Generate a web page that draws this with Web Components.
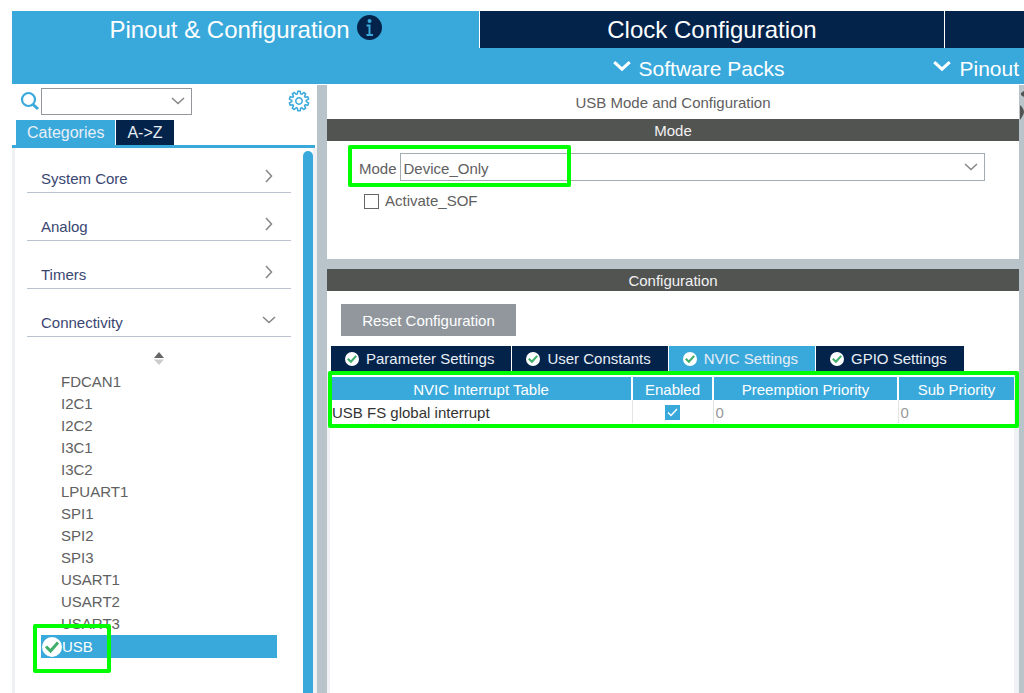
<!DOCTYPE html>
<html lang="en">
<head>
<meta charset="utf-8">
<title>Pinout &amp; Configuration</title>
<style>
  :root {
    --blue: #39a9dc;
    --navy: #03234b;
    --steel: #b8c4ca;
    --dark: #525452;
    --mist: #eff1f4;
    --mark: #00ff00;
  }
  body { margin: 0; background: #fff; color: #606060; font: 15px/22px "Liberation Sans", Arial, sans-serif; overflow: hidden; }
</style>
</head>
<body>
<config-app></config-app>
<script>
const define = (name, html) => {
  const tpl = document.createElement('template');
  tpl.innerHTML = '<style>*{box-sizing:border-box}button,select{font:inherit;color:inherit;margin:0;border:0;padding:0;background:none;border-radius:0}</style>' + html;
  customElements.define(name, class extends HTMLElement {
    constructor() {
      super();
      this.attachShadow({ mode: 'open' }).append(tpl.content.cloneNode(true));
    }
  });
};

// Outline of a gear wheel centred on the origin.
const gearPath = (teeth, inner, outer) => {
  const points = [];
  const step = Math.PI * 2 / teeth;
  for (let i = 0; i < teeth; i++) {
    [[-0.36, inner], [-0.2, outer], [0.2, outer], [0.36, inner]].forEach(([offset, radius]) => {
      const angle = (i + offset) * step - Math.PI / 2;
      points.push((Math.cos(angle) * radius).toFixed(2) + ' ' + (Math.sin(angle) * radius).toFixed(2));
    });
  }
  return 'M' + points.join('L') + 'z';
};

define('chevron-icon', `
<style>
  :host { display: block; width: 14px; height: 14px; flex: none; pointer-events: none; color: #858585; }
  :host([dir="right"]) svg { transform: rotate(-90deg); }
  :host([bold]) { width: 18px; height: 18px; color: #fff; }
  :host([bold]) path { stroke-width: 2.4; }
  svg { display: block; width: 100%; height: 100%; }
</style>
<svg viewBox="0 0 14 14" fill="none" stroke="currentColor" stroke-width="1.5"><path d="M1 4 7 9.500l6-5.500"/></svg>`);

define('status-check', `
<style>
  :host { display: block; width: 14px; height: 14px; flex: none; }
  :host([large]) { width: 20px; height: 20px; }
  svg { display: block; width: 100%; height: 100%; }
</style>
<svg viewBox="0 0 20 20"><circle cx="10" cy="10" r="10" fill="#fff"/><path d="M4 9.500 8.500 14 16 5.500" fill="none" stroke="#3fae6b" stroke-width="3"/></svg>`);

define('mark-box', `
<style>
  :host { display: block; position: absolute; border: 4px solid var(--mark); border-radius: 2px; pointer-events: none; z-index: 2; }
</style>`);

define('nav-tab', `
<style>
  :host { display: block; }
  button { display: flex; align-items: center; justify-content: center; gap: 7px; width: 100%; height: 37px; background: var(--navy); color: #fff; font-size: 24px; white-space: nowrap; }
  :host([active]) button { background: var(--blue); }
</style>
<button type="button"><slot></slot></button>`);

define('info-icon', `
<style>:host { display: block; width: 25px; height: 25px; margin-top: -4px; } svg { display: block; }</style>
<svg width="25" height="25" viewBox="0 0 25 25"><circle cx="12.500" cy="12.500" r="12.500" fill="#03234b"/><circle cx="12.500" cy="6" r="2" fill="#39a9dc"/><path d="M9.500 10.500h3V20M9.500 20h6.500" fill="none" stroke="#39a9dc" stroke-width="2"/></svg>`);

define('menu-button', `
<style>
  :host { display: block; }
  button { display: flex; align-items: center; gap: 8px; height: 36px; color: #fff; font-size: 21px; line-height: 24px; }
  span { padding-top: 6px; }
</style>
<button type="button"><chevron-icon bold></chevron-icon><span><slot></slot></span></button>`);

define('top-nav', `
<style>
  :host { display: block; padding-top: 11px; }
  .tabs { display: grid; grid-template-columns: 467fr 464fr 79fr; gap: 1px; }
  .menus { display: flex; justify-content: flex-end; gap: 149px; background: var(--blue); padding-right: 5px; }
</style>
<nav class="tabs" aria-label="Views">
  <nav-tab active>Pinout &amp; Configuration<info-icon></info-icon></nav-tab>
  <nav-tab>Clock Configuration</nav-tab>
  <nav-tab aria-label="Project"></nav-tab>
</nav>
<div class="menus"><menu-button>Software Packs</menu-button><menu-button>Pinout</menu-button></div>`);

define('category-row', `
<style>
  :host { display: block; }
  button { display: flex; justify-content: space-between; align-items: center; width: 100%; height: 28px; padding: 0 15px 0 14px; border-bottom: 1px solid #b9c3cf; color: #3a4672; text-align: left; }
  ::slotted(chevron-icon) { margin-bottom: 6px; }
</style>
<button type="button"><span><slot></slot></span><slot name="icon"></slot></button>`);

define('peripheral-item', `
<style>
  :host { display: block; height: 22px; padding-left: 20px; white-space: nowrap; }
  :host([selected]) { display: flex; align-items: center; height: 23px; padding-left: 1px; background: var(--blue); color: #fff; }
</style>
<slot></slot>`);

define('side-panel', `
<style>
  :host { display: flex; flex-direction: column; min-width: 0; }
  .search { display: flex; align-items: center; height: 32px; padding: 0 7px 0 8px; }
  .combo { display: grid; width: 151px; height: 27px; align-items: center; }
  .combo > * { grid-area: 1 / 1; }
  .combo select { width: 100%; height: 100%; border: 1px solid #93979b; appearance: none; background: #fff; }
  .combo chevron-icon { justify-self: end; margin-right: 7px; }
  .gear { margin-left: auto; }
  svg { display: block; }
  .tabs { display: flex; gap: 1px; padding: 3px 4px 0; margin-right: 2px; border-bottom: 3px solid var(--blue); }
  .tabs button { height: 25px; padding: 0 11px; background: var(--navy); color: #e8eef5; font-size: 16px; }
  .tabs button.on { background: var(--blue); }
  .scroll { flex: 1; display: flex; border-left: 3px solid var(--mist); padding-right: 4px; background: linear-gradient(var(--mist), var(--mist)) right / 4px 100% no-repeat; }
  .list { flex: 1; padding: 17px 12px 20px 12px; }
  .bar { width: 10px; margin-top: 3px; background: var(--blue); border-radius: 5px 5px 0 0; }
  .groups { display: grid; gap: 20px; }
  .sort { margin: 15px auto 6px; }
  .items { position: relative; margin: 0 14px; }
  mark-box { left: -8px; bottom: -15px; width: 78px; height: 49px; }
</style>
<div class="search">
  <svg width="21" height="20" viewBox="0 0 21 20" fill="none" stroke="#39a9dc"><circle cx="8.500" cy="8.500" r="6.500" stroke-width="2.200"/><path d="m13 13.500 5 4.500" stroke-width="3"/></svg>
  <div class="combo"><select aria-label="Search peripheral"><option></option></select><chevron-icon></chevron-icon></div>
  <button class="gear" type="button" aria-label="Settings"><svg width="22" height="22" viewBox="-11 -11 22 22" fill="none" stroke="#39a9dc" stroke-width="1.500" stroke-linejoin="round"><circle r="3.200"/><path d="${gearPath(10, 7.3, 9.8)}"/></svg></button>
</div>
<div class="tabs"><button type="button" class="on">Categories</button><button type="button">A-&gt;Z</button></div>
<div class="scroll">
  <div class="list">
    <div class="groups">
      <category-row>System Core<chevron-icon slot="icon" dir="right"></chevron-icon></category-row>
      <category-row>Analog<chevron-icon slot="icon" dir="right"></chevron-icon></category-row>
      <category-row>Timers<chevron-icon slot="icon" dir="right"></chevron-icon></category-row>
      <category-row>Connectivity<chevron-icon slot="icon"></chevron-icon></category-row>
    </div>
    <svg class="sort" width="12" height="13" viewBox="0 0 12 13"><path d="M1 6 6 0l5 6z" fill="#666"/><path d="M1 7.500h10L6 13z" fill="#ccc"/></svg>
    <div class="items">
      <peripheral-item>FDCAN1</peripheral-item>
      <peripheral-item>I2C1</peripheral-item>
      <peripheral-item>I2C2</peripheral-item>
      <peripheral-item>I3C1</peripheral-item>
      <peripheral-item>I3C2</peripheral-item>
      <peripheral-item>LPUART1</peripheral-item>
      <peripheral-item>SPI1</peripheral-item>
      <peripheral-item>SPI2</peripheral-item>
      <peripheral-item>SPI3</peripheral-item>
      <peripheral-item>USART1</peripheral-item>
      <peripheral-item>USART2</peripheral-item>
      <peripheral-item>USART3</peripheral-item>
      <peripheral-item selected><status-check large></status-check>USB</peripheral-item>
      <mark-box></mark-box>
    </div>
  </div>
  <div class="bar"></div>
</div>`);

define('section-bar', `
<style>:host { display: block; height: 22px; line-height: 24px; background: var(--dark); color: #f2f2f2; text-align: center; }</style>
<slot></slot>`);

define('mode-section', `
<style>
  :host { display: block; }
  .body { position: relative; height: 118px; padding: 12px 34px 0 32px; }
  .row { display: flex; align-items: center; gap: 3px; }
  .row label { padding-top: 4px; }
  .combo { flex: 1; display: grid; height: 28px; align-items: center; }
  .combo > * { grid-area: 1 / 1; }
  select { width: 100%; height: 100%; border: 1px solid #a3adb1; padding: 4px 0 0 3px; appearance: none; background: #fff; }
  chevron-icon { justify-self: end; margin-right: 7px; }
  .check { display: flex; align-items: center; gap: 6px; margin: 9px 0 0 5px; width: max-content; }
  input { appearance: none; width: 15px; height: 15px; margin: 0; border: 1px solid #666; background: #fff; }
  mark-box { left: 21px; top: 4px; width: 223px; height: 42px; }
</style>
<section-bar>Mode</section-bar>
<div class="body">
  <div class="row"><label for="mode">Mode</label><div class="combo"><select id="mode"><option>Device_Only</option></select><chevron-icon></chevron-icon></div></div>
  <label class="check"><input type="checkbox">Activate_SOF</label>
  <mark-box></mark-box>
</div>`);

define('settings-tab', `
<style>
  :host { display: block; }
  button { display: flex; align-items: center; gap: 7px; height: 25px; padding: 0 17px 0 14px; background: var(--navy); color: #e8eef5; white-space: nowrap; }
  :host([active]) button { background: var(--blue); }
</style>
<button type="button"><status-check></status-check><slot></slot></button>`);

define('nvic-table', `
<style>
  :host { display: block; position: relative; padding-top: 6px; }
  table { width: 100%; table-layout: fixed; border-collapse: collapse; }
  th { height: 23px; padding: 2px 0 0; line-height: 21px; background: var(--blue); color: #fff; font-weight: 400; border-right: 2px solid #fff; }
  td { height: 23px; padding: 2px 2px 0; line-height: 21px; border-right: 1px solid #e2e4e6; color: #999; }
  th:last-child, td:last-child { border-right: 0; }
  td:first-child { color: #333; padding-left: 1px; }
  .enabled { width: 81px; text-align: center; }
  .pre { width: 185px; }
  .sub { width: 116px; }
  input { appearance: none; display: block; width: 15px; height: 15px; margin: 0 auto; background: var(--blue); }
  .tick { display: grid; place-items: center; }
  .tick > * { grid-area: 1 / 1; pointer-events: none; }
  mark-box { left: -3px; right: -5px; top: 0; bottom: -5px; }
</style>
<table>
  <thead><tr><th>NVIC Interrupt Table</th><th class="enabled">Enabled</th><th class="pre">Preemption Priority</th><th class="sub">Sub Priority</th></tr></thead>
  <tbody><tr><td>USB FS global interrupt</td><td><div class="tick"><input type="checkbox" checked aria-label="Enable USB FS global interrupt"><svg width="15" height="15" viewBox="0 0 15 15"><path d="m3 7.500 3 3 6-6.500" fill="none" stroke="#fff" stroke-width="1.500"/></svg></div></td><td>0</td><td>0</td></tr></tbody>
</table>
<mark-box></mark-box>`);

define('config-section', `
<style>
  :host { display: flex; flex-direction: column; flex: 1; }
  .reset { width: 175px; height: 32px; padding-top: 2px; margin: 13px 0 10px 14px; background: #91979d; color: #fff; align-self: flex-start; }
  .tabs { display: flex; gap: 1px; padding-left: 4px; }
  .panel { flex: 1; border: solid var(--mist); border-width: 0 5px 0 3px; padding-left: 1px; }
</style>
<section-bar>Configuration</section-bar>
<button class="reset" type="button">Reset Configuration</button>
<div class="tabs"><settings-tab>Parameter Settings</settings-tab><settings-tab>User Constants</settings-tab><settings-tab active>NVIC Settings</settings-tab><settings-tab>GPIO Settings</settings-tab></div>
<div class="panel"><nvic-table></nvic-table></div>`);

define('config-panel', `
<style>
  :host { display: flex; flex-direction: column; min-width: 0; }
  h1 { margin: 0; padding: 7px 0 5px; font-size: 15px; line-height: 22px; font-weight: 400; text-align: center; }
  .split { height: 10px; background: var(--steel); }
</style>
<h1>USB Mode and Configuration</h1>
<mode-section></mode-section>
<div class="split"></div>
<config-section></config-section>`);

define('config-app', `
<style>
  :host { display: flex; flex-direction: column; min-height: 100vh; padding-left: 12px; box-sizing: border-box; }
  main { flex: 1; display: grid; grid-template-columns: 305px 10px minmax(0, 1fr) 5px; padding-top: 1px; }
  .split { background: var(--steel); }
  svg { display: block; margin-top: 5px; }
</style>
<top-nav></top-nav>
<main>
  <side-panel></side-panel>
  <div class="split"></div>
  <config-panel></config-panel>
  <div class="split"><svg width="5" height="32" viewBox="0 0 5 32" fill="#525452"><path d="M5 1 2 3v2l3 2zM1 15l2 2q2 3 2 5t-2 5l-2 3z"/></svg></div>
</main>`);
</script>
</body>
</html>
